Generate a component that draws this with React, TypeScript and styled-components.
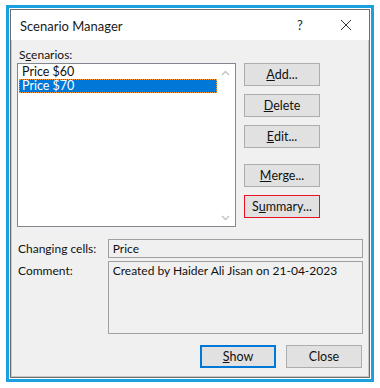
import styled, { createGlobalStyle } from "styled-components";

const GlobalStyle = createGlobalStyle`
  html, body {
    margin: 0;
    padding: 0;
    background: #ffffff;
  }
  body {
    font-family: Lato, "Noto Sans", sans-serif;
    font-size: 12px;
    color: #000000;
  }
`;

const Page = styled.div`
  width: 380px;
  height: 388px;
  padding: 5px 0 0 6px;
  box-sizing: border-box;
`;

const Frame = styled.div`
  width: 368px;
  height: 377px;
  box-sizing: border-box;
  border: 3px solid #1ba1e2;
  padding: 1px;
  background: #ffffff;
`;

const Dialog = styled.div`
  width: 100%;
  height: 100%;
  box-sizing: border-box;
  border: 1px solid #6e6e6e;
  box-shadow: inset 0 0 0 1px #c8c8c8;
  background: #f0f0f0;
  display: flex;
  flex-direction: column;
`;

const TitleBar = styled.div`
  height: 30px;
  background: #ffffff;
  display: flex;
  align-items: center;
  padding: 0 0 0 9px;
  flex-shrink: 0;
`;

const Title = styled.div`
  flex: 1;
  font-size: 13px;
  color: #1a1a1a;
  padding-top: 1px;
`;

const TitleButton = styled.div<{ $w: number }>`
  width: ${(p) => p.$w}px;
  height: 30px;
  display: flex;
  align-items: center;
  justify-content: center;
  font-size: 13px;
  color: #222;
`;

const Body = styled.div`
  flex: 1;
  padding: 6px 6px 0 6px;
  display: flex;
  flex-direction: column;
`;

const Label = styled.div`
  line-height: 17px;
  height: 17px;
  padding-left: 2px;
  color: #111;
`;

const MainRow = styled.div`
  display: flex;
  gap: 8px;
`;

const ListBox = styled.div`
  width: 219px;
  height: 164px;
  box-sizing: border-box;
  border: 1px solid #828790;
  background: #ffffff;
  display: flex;
  padding: 1px;
`;

const ListItems = styled.div`
  flex: 1;
  display: flex;
  flex-direction: column;
`;

const ListItem = styled.div<{ $selected?: boolean }>`
  height: 14px;
  line-height: 14px;
  padding-left: 3px;
  font-size: 12.5px;
  overflow: hidden;
  box-sizing: border-box;
  background: ${(p) => (p.$selected ? "#0078d7" : "transparent")};
  color: ${(p) => (p.$selected ? "#ffffff" : "#111")};
  outline: ${(p) => (p.$selected ? "1px dotted #ff9a2e" : "none")};
  outline-offset: -1px;
`;

const ScrollBar = styled.div`
  width: 17px;
  background: #ffffff;
  display: flex;
  flex-direction: column;
  justify-content: space-between;
  align-items: center;
  padding: 5px 0 4px;
`;

const ButtonColumn = styled.div`
  display: flex;
  flex-direction: column;
  gap: 8px;
`;

const Button = styled.div<{ $variant?: "default" | "primary" | "marked"; $gapTop?: number }>`
  width: 76px;
  height: 23px;
  box-sizing: border-box;
  background: #e1e1e1;
  border: ${(p) =>
    p.$variant === "primary"
      ? "2px solid #0078d7"
      : p.$variant === "marked"
      ? "1px solid #e81123"
      : "1px solid #adadad"};
  display: flex;
  align-items: center;
  justify-content: center;
  font-size: 12.5px;
  color: #111;
  margin-top: ${(p) => p.$gapTop ?? 0}px;
`;

const FieldRow = styled.div<{ $top: number }>`
  display: flex;
  margin-top: ${(p) => p.$top}px;
`;

const FieldLabel = styled.div`
  width: 90px;
  padding-left: 1px;
  line-height: 19px;
  color: #111;
`;

const Field = styled.div<{ $h: number }>`
  width: 256px;
  height: ${(p) => p.$h}px;
  box-sizing: border-box;
  border: 1px solid #a0a0a0;
  background: #f0f0f0;
  padding: 0 4px;
  line-height: 17px;
  color: #111;
`;

const Footer = styled.div`
  display: flex;
  justify-content: flex-end;
  gap: 10px;
  margin-top: 11px;
  padding-right: 1px;
`;

const Chevron = ({ up }: { up?: boolean }) => (
  <svg width="9" height="6" viewBox="0 0 9 6">
    <path
      d={up ? "M1 5 L4.5 1.5 L8 5" : "M1 1 L4.5 4.5 L8 1"}
      fill="none"
      stroke="#c2c2c2"
      strokeWidth="1.4"
    />
  </svg>
);

const CloseIcon = () => (
  <svg width="12" height="12" viewBox="0 0 12 12">
    <path d="M1 1 L11 11 M11 1 L1 11" stroke="#333" strokeWidth="1" />
  </svg>
);

export default function App() {
  return (
    <>
      <GlobalStyle />
      <Page>
        <Frame>
          <Dialog>
            <TitleBar>
              <Title>Scenario Manager</Title>
              <TitleButton $w={46}>?</TitleButton>
              <TitleButton $w={46}>
                <CloseIcon />
              </TitleButton>
            </TitleBar>
            <Body>
              <Label>
                S<u>c</u>enarios:
              </Label>
              <MainRow>
                <ListBox>
                  <ListItems>
                    <ListItem>Price $60</ListItem>
                    <ListItem $selected>Price $70</ListItem>
                  </ListItems>
                  <ScrollBar>
                    <Chevron up />
                    <Chevron />
                  </ScrollBar>
                </ListBox>
                <ButtonColumn>
                  <Button>
                    <u>A</u>dd...
                  </Button>
                  <Button>
                    <u>D</u>elete
                  </Button>
                  <Button>
                    <u>E</u>dit...
                  </Button>
                  <Button $gapTop={8}>
                    <u>M</u>erge...
                  </Button>
                  <Button $variant="marked">
                    S<u>u</u>mmary...
                  </Button>
                </ButtonColumn>
              </MainRow>
              <FieldRow $top={12}>
                <FieldLabel>Changing cells:</FieldLabel>
                <Field $h={19}>Price</Field>
              </FieldRow>
              <FieldRow $top={3}>
                <FieldLabel>Comment:</FieldLabel>
                <Field $h={73}>Created by Haider Ali Jisan on 21-04-2023</Field>
              </FieldRow>
              <Footer>
                <Button $variant="primary">
                  <u>S</u>how
                </Button>
                <Button>Close</Button>
              </Footer>
            </Body>
          </Dialog>
        </Frame>
      </Page>
    </>
  );
}
